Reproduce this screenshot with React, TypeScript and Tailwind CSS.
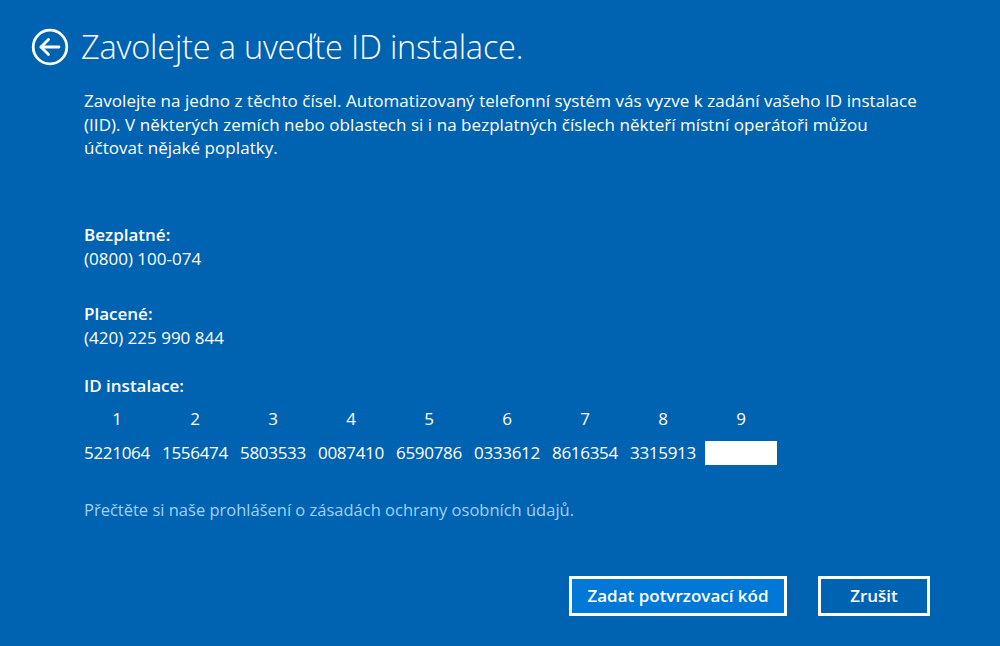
const IID = ['5221064', '1556474', '5803533', '0087410', '6590786', '0333612', '8616354', '3315913'];

function BackIcon() {
  return (
    <svg width="38" height="38" viewBox="0 0 38 38" fill="none" stroke="white" strokeWidth="2.8" strokeLinecap="round" strokeLinejoin="round">
      <circle cx="19" cy="19" r="16.8" />
      <path d="M10 19h18" />
      <path d="M17.5 11.5 10 19l7.5 7.5" />
    </svg>
  );
}

export default function App() {
  return (
    <div className="h-[646px] w-full overflow-hidden bg-[#0063b1] text-white font-['Open_Sans','Noto_Sans',sans-serif]">
      <div className="mt-[28px] flex h-[38px] items-center pl-[31px]">
        <button type="button" className="flex h-[38px] w-[38px] items-center justify-center" aria-label="Zpět">
          <BackIcon />
        </button>
        <h1 className="ml-[12px] text-[32.5px] font-light leading-[38px] tracking-[-0.2px]">
          Zavolejte a uveďte ID instalace.
        </h1>
      </div>

      <div className="pl-[84px] pr-[60px]">
        <p className="mt-[23px] text-[17px] leading-[23.5px] tracking-[0.05px]">
          Zavolejte na jedno z těchto čísel. Automatizovaný telefonní systém vás vyzve k zadání vašeho ID instalace
          <br />
          (IID). V některých zemích nebo oblastech si i na bezplatných číslech někteří místní operátoři můžou
          <br />
          účtovat nějaké poplatky.
        </p>

        <div className="mt-[63px] text-[17px] leading-[24px]">
          <div className="font-semibold">Bezplatné:</div>
          <div>(0800) 100-074</div>
        </div>

        <div className="mt-[31px] text-[17px] leading-[24px]">
          <div className="font-semibold">Placené:</div>
          <div>(420) 225 990 844</div>
        </div>

        <div className="mt-[24px] text-[17px] font-semibold leading-[24px]">ID instalace:</div>

        <div className="ml-[-3px] mt-[9px] grid grid-cols-[repeat(9,72px)] gap-x-[6px] text-[17px] leading-[24px]">
          {[1, 2, 3, 4, 5, 6, 7, 8, 9].map((n) => (
            <div key={n} className="text-center">{n}</div>
          ))}
        </div>
        <div className="ml-[-3px] mt-[10px] grid grid-cols-[repeat(9,72px)] gap-x-[6px] text-[17px] leading-[24px]">
          {IID.map((group) => (
            <div key={group} className="pl-[3px] tracking-[-0.3px]">{group}</div>
          ))}
          <input type="text" className="h-[24px] w-[72px] bg-white text-black outline-none" aria-label="Skupina 9" />
        </div>

        <a href="#" className="mt-[33px] block text-[16.5px] leading-[24px] text-[#9fd2fb]">
          Přečtěte si naše prohlášení o zásadách ochrany osobních údajů.
        </a>

        <div className="mt-[54px] flex justify-end gap-[31px] pr-[10px]">
          <button type="button" className="h-[40px] w-[218px] border-[3px] border-white bg-[#0078d7] text-[17px] font-semibold">
            Zadat potvrzovací kód
          </button>
          <button type="button" className="h-[40px] w-[112px] border-[3px] border-white text-[17px] font-semibold">
            Zrušit
          </button>
        </div>
      </div>
    </div>
  );
}
